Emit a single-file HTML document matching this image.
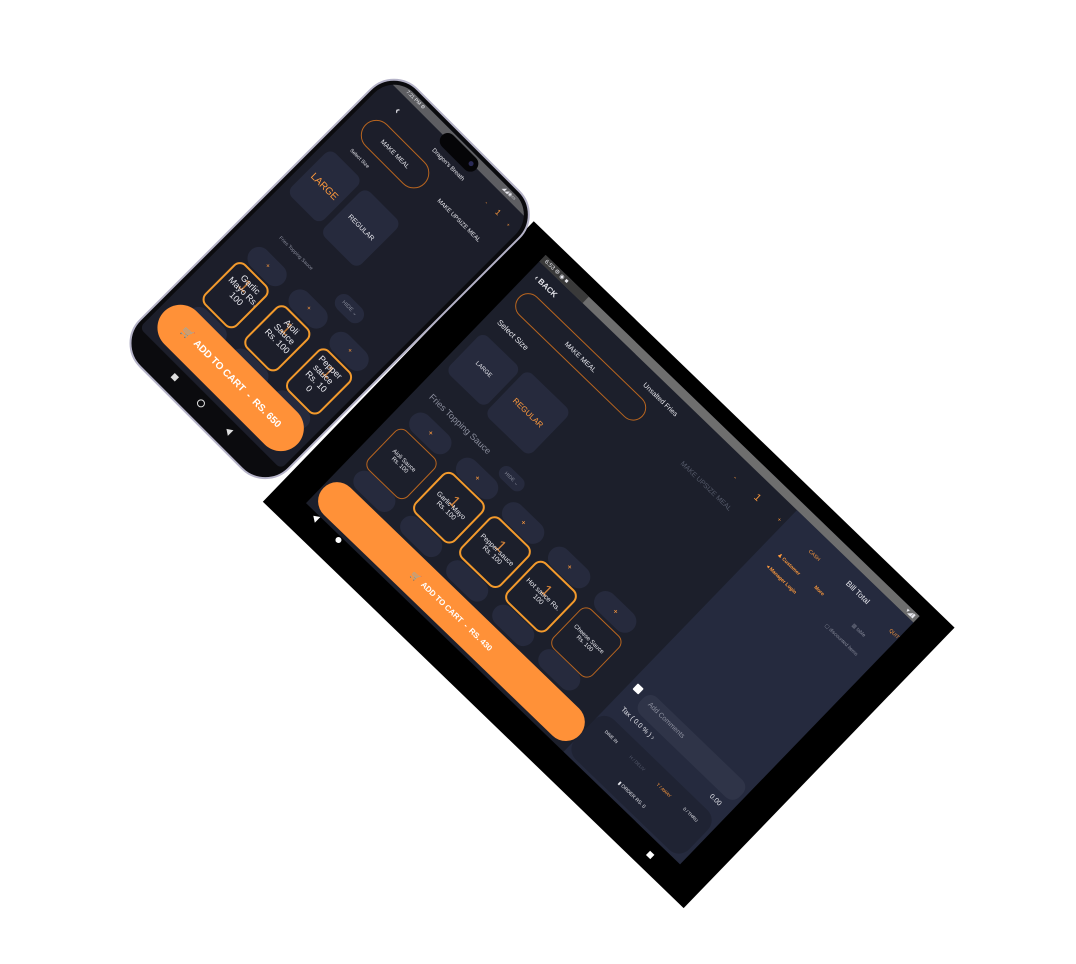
<!DOCTYPE html>
<html><head><meta charset="utf-8"><style>
*{margin:0;padding:0;box-sizing:border-box}
body{width:1076px;height:964px;background:#fff;position:relative;overflow:hidden;font-family:"Liberation Sans",sans-serif}
.rot{position:absolute;transform-origin:0 0}
.a{position:absolute;white-space:nowrap}
.c{transform:translate(-50%,-50%)}
.w{color:#e8e8ee}
.o{color:#ff9a3c}
.g{color:#8a8d9c}
.box{position:absolute;background:#262a3d;border-radius:8px}
.pill{position:absolute;background:#262a3d;border-radius:14px}
</style></head><body>

<!-- TABLET -->
<div class="rot" style="left:521px;top:220px;transform:rotate(44deg)">
  <div class="a" style="left:10px;top:-8px;width:585px;height:390px;background:#000"></div>
  <!-- screen -->
  <div class="a" style="left:42px;top:8px;width:520px;height:345px;background:#1c1f2b;overflow:hidden">
    <div class="a" style="left:0;top:0;width:520px;height:9px;background:#6e6e6e"></div>
    <div class="a" style="left:0;top:0;width:60px;height:9px;background:#3a3a3a"></div>
    <div class="a w" style="left:4px;top:1px;font-size:6px">6:53 ⚙ ◉ ■</div>
    <div class="a w" style="left:506px;top:1px;font-size:6px">▾◢▮</div>
    <div class="a" style="left:358px;top:9px;width:162px;height:336px;background:#252a3e"></div>
  </div>
  <div class="a w" style="left:50px;top:26px;font-size:8px;font-weight:bold">‹ BACK</div>
  <div class="a" style="left:52px;top:44px;width:172px;height:26px;border:1px solid #b8651f;border-radius:13px"></div>
  <div class="a w c" style="left:138px;top:58px;font-size:7px">MAKE MEAL</div>
  <div class="a w c" style="left:225px;top:33px;font-size:7px">Unsalted Fries</div>
  <div class="a w" style="left:54px;top:84px;font-size:8px">Select Size</div>
  <div class="box" style="left:50px;top:107px;width:54px;height:54px"></div>
  <div class="a w c" style="left:77px;top:134px;font-size:6px">LARGE</div>
  <div class="box" style="left:108px;top:103px;width:62px;height:62px"></div>
  <div class="a o c" style="left:139px;top:134px;font-size:8px">REGULAR</div>
  <div class="a g" style="left:57px;top:184px;font-size:9px">Fries Topping Sauce</div>
  <div class="pill" style="left:158px;top:185px;width:30px;height:15px"></div>
  <div class="a g c" style="left:173px;top:193px;font-size:5px">HIDE ⌄</div>
  <div class="a g" style="left:284px;top:60px;font-size:7px;color:#555a6a">MAKE UPSIZE MEAL</div>
  <div class="a o c" style="left:333px;top:37px;font-size:7px">-</div>
  <div class="a o c" style="left:363px;top:36px;font-size:10px">1</div>
  <div class="a o c" style="left:394px;top:37px;font-size:6px">+</div>

  <div class="pill" style="left:58px;top:205px;width:50px;height:23px"></div><div class="a o c" style="left:83px;top:216px;font-size:8px">+</div>
  <div class="pill" style="left:123px;top:205px;width:50px;height:23px"></div><div class="a o c" style="left:148px;top:216px;font-size:8px">+</div>
  <div class="pill" style="left:187px;top:205px;width:50px;height:23px"></div><div class="a o c" style="left:212px;top:216px;font-size:8px">+</div>
  <div class="pill" style="left:251px;top:205px;width:50px;height:23px"></div><div class="a o c" style="left:276px;top:216px;font-size:8px">+</div>
  <div class="pill" style="left:315px;top:205px;width:50px;height:23px"></div><div class="a o c" style="left:340px;top:216px;font-size:8px">+</div>
  <div class="pill" style="left:58px;top:286px;width:50px;height:22px"></div>
  <div class="pill" style="left:123px;top:286px;width:50px;height:22px"></div>
  <div class="pill" style="left:187px;top:286px;width:50px;height:22px"></div>
  <div class="pill" style="left:251px;top:286px;width:50px;height:22px"></div>
  <div class="pill" style="left:315px;top:286px;width:50px;height:22px"></div>

  <div class="a" style="left:56px;top:231px;width:55px;height:55px;border:1px solid #b8651f;border-radius:9px;background:#1c1f2b"></div>
  <div class="a w c" style="left:83px;top:258px;font-size:6px;text-align:center;white-space:normal;width:40px">Aioli Sauce Rs. 100</div>
  <div class="a" style="left:120px;top:229px;width:56px;height:56px;border:2px solid #f39a2c;border-radius:9px;background:#1c1f2b"></div>
  <div class="a o c" style="left:148px;top:250px;font-size:16px;opacity:.8">1</div>
  <div class="a w c" style="left:148px;top:258px;font-size:7px;text-align:center;white-space:normal;width:44px">Garlic Mayo Rs. 100</div>
  <div class="a" style="left:184px;top:229px;width:56px;height:56px;border:2px solid #f39a2c;border-radius:9px;background:#1c1f2b"></div>
  <div class="a o c" style="left:212px;top:250px;font-size:16px;opacity:.8">1</div>
  <div class="a w c" style="left:212px;top:258px;font-size:7px;text-align:center;white-space:normal;width:44px">Pepper sauce Rs. 100</div>
  <div class="a" style="left:248px;top:229px;width:56px;height:56px;border:2px solid #f39a2c;border-radius:9px;background:#1c1f2b"></div>
  <div class="a o c" style="left:276px;top:250px;font-size:16px;opacity:.8">1</div>
  <div class="a w c" style="left:276px;top:258px;font-size:7px;text-align:center;white-space:normal;width:44px">Hot sauce Rs. 100</div>
  <div class="a" style="left:313px;top:231px;width:55px;height:55px;border:1px solid #b8651f;border-radius:9px;background:#1c1f2b"></div>
  <div class="a w c" style="left:340px;top:258px;font-size:6px;text-align:center;white-space:normal;width:40px">Cheese Sauce Rs. 100</div>

  <div class="a" style="left:44px;top:311px;width:356px;height:38px;background:#ff9138;border-radius:19px"></div>
  <div class="a w c" style="left:222px;top:330px;font-size:8px;font-weight:bold;color:#fff">🛒&nbsp; ADD TO CART &nbsp;- &nbsp;RS. 430</div>

  <div class="a o c" style="left:444px;top:38px;font-size:5px">CASH</div>
  <div class="a w c" style="left:501px;top:34px;font-size:8px">Bill Total</div>
  <div class="a o c" style="left:556px;top:39px;font-size:5px">QUIT</div>
  <div class="a o c" style="left:432px;top:62px;font-size:5px;font-weight:bold">♟ Customer</div>
  <div class="a o c" style="left:472px;top:60px;font-size:5px;font-weight:bold">More</div>
  <div class="a g c" style="left:528px;top:61px;font-size:5px">▥ table</div>
  <div class="a o c" style="left:437px;top:78px;font-size:5px;font-weight:bold">◂ Manager Login</div>
  <div class="a g c" style="left:522px;top:80px;font-size:5px">▢ discounted items</div>
  <div class="a" style="left:406px;top:252px;width:8px;height:8px;background:#fff;border-radius:1px"></div>
  <div class="a" style="left:420px;top:249px;width:138px;height:24px;background:#2f3448;border-radius:10px"></div>
  <div class="a g" style="left:428px;top:256px;font-size:7px">Add Comments</div>
  <div class="a w" style="left:412px;top:278px;font-size:7px">Tax ( 0.0 % ) ›</div>
  <div class="a w" style="left:536px;top:279px;font-size:7px">0.00</div>
  <div class="a" style="left:400px;top:295px;width:158px;height:55px;background:#1f2333;border-radius:14px"></div>
  <div class="a w c" style="left:424px;top:309px;font-size:4.5px">DINE IN</div>
  <div class="a g c" style="left:461px;top:310px;font-size:4.5px;color:#555a6c">H / DELIV</div>
  <div class="a o c" style="left:499px;top:311px;font-size:4.5px">T / AWAY</div>
  <div class="a w c" style="left:535px;top:310px;font-size:4.5px">0 / THRU</div>
  <div class="a w c" style="left:479px;top:337px;font-size:5px">▮ ORDER RS. 0</div>

  <div class="a" style="left:56px;top:353px;width:0;height:0;border-top:4px solid transparent;border-bottom:4px solid transparent;border-right:6px solid #fff"></div>
  <div class="a" style="left:88px;top:354px;width:6px;height:6px;background:#fff;border-radius:50%"></div>
  <div class="a" style="left:531px;top:364px;width:6px;height:6px;background:#fff"></div>
</div>

<!-- PHONE -->
<div class="rot" style="left:394px;top:76px;transform:rotate(45deg)">
  <div class="a" style="left:-8px;top:-8px;width:212px;height:394px;background:#0b0b0e;border:2px solid #b5b3c8;border-radius:34px"></div>
  <div class="a" style="left:-2px;top:-2px;width:200px;height:360px;background:#1c1e2a;border-radius:28px 28px 6px 6px;overflow:hidden">
    <div class="a" style="left:0;top:0;width:200px;height:9px;background:#5e5e62"></div>
    <div class="a w" style="left:22px;top:1px;font-size:5px">7:21 PM ⚙</div>
    <div class="a w" style="left:158px;top:1px;font-size:5px">◢◢◉▭</div>
  </div>
  <div class="a" style="left:76px;top:0px;width:48px;height:16px;background:#050507;border-radius:8px"></div>
  <div class="a" style="left:114px;top:5px;width:5px;height:5px;background:#2a2a55;border-radius:50%"></div>
  <div class="a w c" style="left:27px;top:22px;font-size:11px;font-weight:bold">‹</div>
  <div class="a w c" style="left:101px;top:25px;font-size:6px">Dragon's Breath</div>
  <div class="a o c" style="left:155px;top:25px;font-size:6px">-</div>
  <div class="a o c" style="left:170px;top:23px;font-size:8px">1</div>
  <div class="a o c" style="left:186px;top:25px;font-size:5px">+</div>
  <div class="a" style="left:14px;top:39px;width:84px;height:31px;border:1px solid #b8651f;border-radius:16px"></div>
  <div class="a w c" style="left:56px;top:55px;font-size:6.5px">MAKE MEAL</div>
  <div class="a w c" style="left:148px;top:57px;font-size:6px">MAKE UPSIZE MEAL</div>
  <div class="a w c" style="left:34px;top:83px;font-size:5px">Select Size</div>
  <div class="box" style="left:6px;top:96px;width:46px;height:62px"></div>
  <div class="a o c" style="left:29px;top:128px;font-size:10px">LARGE</div>
  <div class="box" style="left:58px;top:99px;width:52px;height:64px"></div>
  <div class="a w c" style="left:84px;top:131px;font-size:7px">REGULAR</div>
  <div class="a g c" style="left:56px;top:195px;font-size:5px">Fries Topping Sauce</div>
  <div class="pill" style="left:116px;top:187px;width:34px;height:18px"></div>
  <div class="a g c" style="left:133px;top:196px;font-size:5.5px">HIDE ⌄</div>

  <div class="pill" style="left:22px;top:213px;width:46px;height:23px"></div><div class="a o c" style="left:45px;top:224px;font-size:7px">+</div>
  <div class="pill" style="left:81px;top:214px;width:46px;height:23px"></div><div class="a o c" style="left:104px;top:225px;font-size:7px">+</div>
  <div class="pill" style="left:140px;top:215px;width:46px;height:23px"></div><div class="a o c" style="left:163px;top:226px;font-size:7px">+</div>
  <div class="pill" style="left:22px;top:298px;width:46px;height:22px"></div>
  <div class="pill" style="left:81px;top:298px;width:46px;height:22px"></div>
  <div class="pill" style="left:140px;top:298px;width:46px;height:22px"></div>

  <div class="a" style="left:20px;top:238px;width:46px;height:58px;border:2px solid #f39a2c;border-radius:9px;background:#1c1e2a;overflow:hidden">
    <div class="a o c" style="left:21px;top:14px;font-size:18px;opacity:.7">1</div>
    <div class="a w" style="left:4px;top:4px;font-size:9px;line-height:10px;white-space:normal;width:40px;text-align:center">Garlic Mayo Rs. 100</div>
  </div>
  <div class="a" style="left:80px;top:239px;width:46px;height:58px;border:2px solid #f39a2c;border-radius:9px;background:#1c1e2a;overflow:hidden">
    <div class="a o c" style="left:21px;top:14px;font-size:18px;opacity:.7">1</div>
    <div class="a w" style="left:4px;top:4px;font-size:9px;line-height:10px;white-space:normal;width:38px;text-align:center">Aioli Sauce Rs. 100</div>
  </div>
  <div class="a" style="left:140px;top:240px;width:46px;height:58px;border:2px solid #f39a2c;border-radius:9px;background:#1c1e2a;overflow:hidden">
    <div class="a o c" style="left:21px;top:14px;font-size:18px;opacity:.7">1</div>
    <div class="a w" style="left:4px;top:4px;font-size:9px;line-height:10px;white-space:normal;width:30px;text-align:center;word-break:break-all">Pepper sauce Rs. 100</div>
  </div>

  <div class="a" style="left:4px;top:306px;width:188px;height:46px;background:#ff9138;border-radius:23px"></div>
  <div class="a c" style="left:98px;top:329px;font-size:10px;font-weight:bold;color:#fff">🛒&nbsp; ADD TO CART &nbsp;- &nbsp;RS. 650</div>

  <div class="a" style="left:55px;top:365px;width:6px;height:6px;background:#ddd"></div>
  <div class="a" style="left:91px;top:364px;width:8px;height:8px;border:1.5px solid #ddd;border-radius:50%"></div>
  <div class="a" style="left:131px;top:364px;width:0;height:0;border-top:4px solid transparent;border-bottom:4px solid transparent;border-right:6px solid #ddd"></div>
</div>

</body></html>
